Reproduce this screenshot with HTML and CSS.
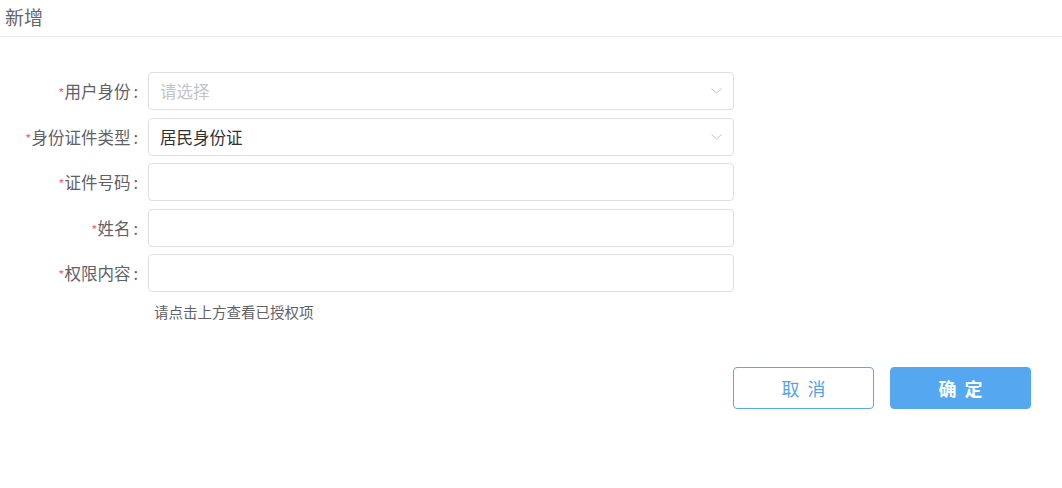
FILE: index.html
```html
<!DOCTYPE html>
<html lang="zh-CN">
<head>
    <meta charset="UTF-8">
    <title>新增</title>
    <link rel="stylesheet" href="styles.css">
</head>
<body>
    <div class="header">新增</div>
    <div class="form">
        <div class="row">
            <label class="label"><span class="req">*</span>用户身份<span class="colon">:</span></label>
            <div class="input select placeholder">请选择
                <svg class="arrow" width="11" height="6" viewBox="0 0 11 6"><path d="M0.5 0.5 L5.5 5 L10.5 0.5" fill="none" stroke="#c0c4cc" stroke-width="1"/></svg>
            </div>
        </div>
        <div class="row">
            <label class="label"><span class="req">*</span>身份证件类型<span class="colon">:</span></label>
            <div class="input select">居民身份证
                <svg class="arrow" width="11" height="6" viewBox="0 0 11 6"><path d="M0.5 0.5 L5.5 5 L10.5 0.5" fill="none" stroke="#c0c4cc" stroke-width="1"/></svg>
            </div>
        </div>
        <div class="row">
            <label class="label"><span class="req">*</span>证件号码<span class="colon">:</span></label>
            <div class="input"></div>
        </div>
        <div class="row">
            <label class="label"><span class="req">*</span>姓名<span class="colon">:</span></label>
            <div class="input"></div>
        </div>
        <div class="row">
            <label class="label"><span class="req">*</span>权限内容<span class="colon">:</span></label>
            <div class="input"></div>
        </div>
        <div class="hint">请点击上方查看已授权项</div>
    </div>
    <div class="actions">
        <button class="btn cancel">取消</button>
        <button class="btn ok">确定</button>
    </div>
</body>
</html>
```

FILE: styles.css
```css
body {
    margin: 0;
    background: #fff;
    font-family: "Noto Sans CJK SC", "Noto Sans", sans-serif;
}

.header {
    height: 36px;
    line-height: 33px;
    padding: 0 5px;
    font-size: 19px;
    color: #666;
    border-bottom: 1px solid #ebebeb;
}

.form {
    padding-top: 35px;
}

.row {
    display: flex;
    align-items: center;
    margin-bottom: 7.5px;
}

.label {
    width: 138px;
    padding-right: 10px;
    text-align: right;
    font-size: 16.5px;
    color: #5f6266;
}

.req {
    color: #f56c6c;
    font-size: 13px;
}

.colon {
    margin-left: 3px;
}

.input {
    box-sizing: border-box;
    width: 586px;
    height: 38px;
    border: 1px solid #dcdfe6;
    border-radius: 4px;
    display: flex;
    align-items: center;
    padding: 0 11px;
    font-size: 16.5px;
    color: #303133;
}

.select {
    justify-content: space-between;
}

.placeholder {
    color: #c0c4cc;
}

.hint {
    margin-top: 11px;
    padding-left: 154px;
    font-size: 14.5px;
    line-height: 18px;
    color: #606266;
}

.actions {
    display: flex;
    justify-content: flex-end;
    gap: 16px;
    padding: 46px 31px 0 0;
}

.btn {
    box-sizing: border-box;
    width: 141px;
    height: 42px;
    border-radius: 4px;
    font-family: inherit;
    font-size: 18px;
    letter-spacing: 8px;
    padding: 0 0 0 8px;
    cursor: pointer;
}

.cancel {
    background: #fff;
    border: 1px solid #5aa9ec;
    color: #55a3e8;
}

.ok {
    background: #55a8f0;
    border: 1px solid #55a8f0;
    color: #fff;
    font-weight: bold;
}
```
